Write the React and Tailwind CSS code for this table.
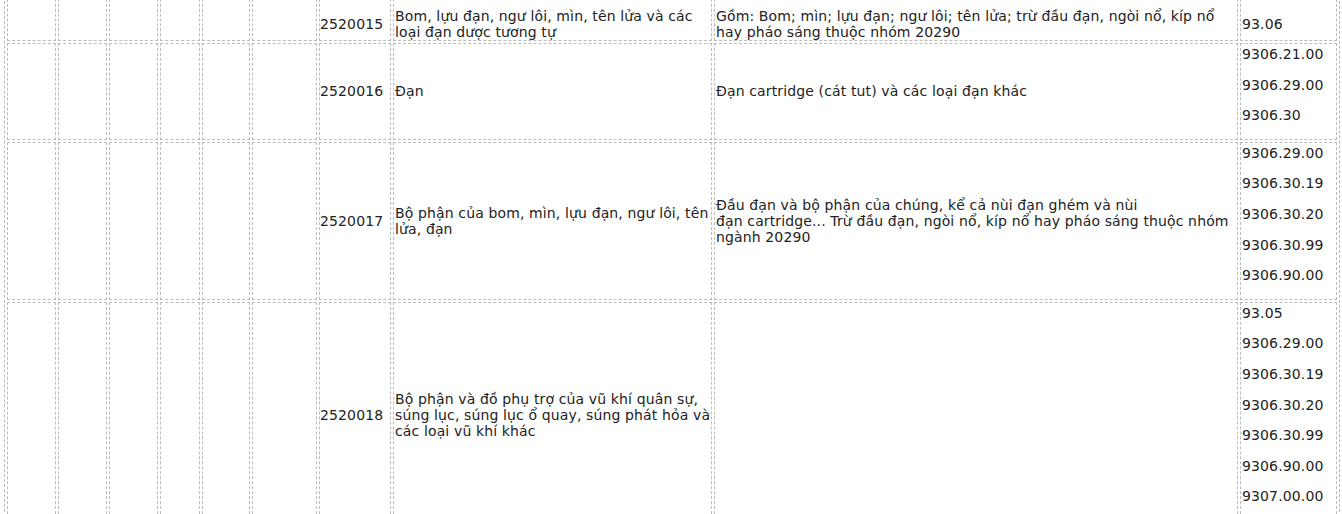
const rows = [
  {
    code: '2520015',
    name: ['Bom, lựu đạn, ngư lôi, mìn, tên lửa và các', 'loại đạn dược tương tự'],
    desc: ['Gồm: Bom; mìn; lựu đạn; ngư lôi; tên lửa; trừ đầu đạn, ngòi nổ, kíp nổ', 'hay pháo sáng thuộc nhóm 20290'],
    hs: ['93.06'],
    single: true,
  },
  {
    code: '2520016',
    name: ['Đạn'],
    desc: ['Đạn cartridge (cát tut) và các loại đạn khác'],
    hs: ['9306.21.00', '9306.29.00', '9306.30'],
    hsPad: 'pb-[1px]',
  },
  {
    code: '2520017',
    name: ['Bộ phận của bom, mìn, lựu đạn, ngư lôi, tên', 'lửa, đạn'],
    desc: [
      'Đầu đạn và bộ phận của chúng, kể cả nùi đạn ghém và nùi',
      'đạn cartridge... Trừ đầu đạn, ngòi nổ, kíp nổ hay pháo sáng thuộc nhóm',
      'ngành 20290',
    ],
    hs: ['9306.29.00', '9306.30.19', '9306.30.20', '9306.30.99', '9306.90.00'],
    hsPad: 'pb-[1px]',
  },
  {
    code: '2520018',
    name: ['Bộ phận và đồ phụ trợ của vũ khí quân sự,', 'súng lục, súng lục ổ quay, súng phát hỏa và', 'các loại vũ khí khác'],
    desc: [],
    hs: ['93.05', '9306.29.00', '9306.30.19', '9306.30.20', '9306.30.99', '9306.90.00', '9307.00.00'],
    hsPad: 'pb-[9px]',
  },
];

const cell = 'border border-dashed border-[#bcbcbc] align-middle';

function Lines({ lines }) {
  return lines.map((l, i) => (
    <span key={i} className="block whitespace-nowrap">
      {l}
    </span>
  ));
}

export default function App() {
  return (
    <div className="h-[514px] w-[1342px] overflow-hidden bg-white font-['DejaVu_Sans',sans-serif] text-[14px] leading-[16px] tracking-[0.13px] text-[#222]">
      <table className="-mt-[4px] ml-[4px] w-[1336px] table-fixed border-separate border-spacing-[2px] border border-dashed border-[#bcbcbc]">
        <colgroup>
          <col className="w-[49px]" />
          <col className="w-[49px]" />
          <col className="w-[49px]" />
          <col className="w-[40px]" />
          <col className="w-[48px]" />
          <col className="w-[65px]" />
          <col className="w-[72px]" />
          <col className="w-[319px]" />
          <col className="w-[524px]" />
          <col className="w-[97px]" />
        </colgroup>
        <tbody>
          {rows.map((r) => {
            const pad = r.single ? 'pt-[8px] pb-0' : 'py-[2px]';
            return (
              <tr key={r.code} className={r.single ? 'h-[42px]' : ''}>
                <td className={`${cell} ${pad}`}></td>
                <td className={`${cell} ${pad}`}></td>
                <td className={`${cell} ${pad}`}></td>
                <td className={`${cell} ${pad}`}></td>
                <td className={`${cell} ${pad}`}></td>
                <td className={`${cell} ${pad}`}></td>
                <td className={`${cell} ${pad} pl-0`}>{r.code}</td>
                <td className={`${cell} ${pad} pl-[1px]`}>
                  <Lines lines={r.name} />
                </td>
                <td className={`${cell} ${pad} pl-[1px]`}>
                  <Lines lines={r.desc} />
                </td>
                {r.single ? (
                  <td className={`${cell} ${pad} pl-[1px]`}>{r.hs[0]}</td>
                ) : (
                  <td className={`${cell} pl-[1px] pt-[2px] ${r.hsPad} align-top`}>
                    {r.hs.map((h) => (
                      <div key={h} className="h-[30.6px] whitespace-nowrap">
                        {h}
                      </div>
                    ))}
                  </td>
                )}
              </tr>
            );
          })}
        </tbody>
      </table>
    </div>
  );
}
